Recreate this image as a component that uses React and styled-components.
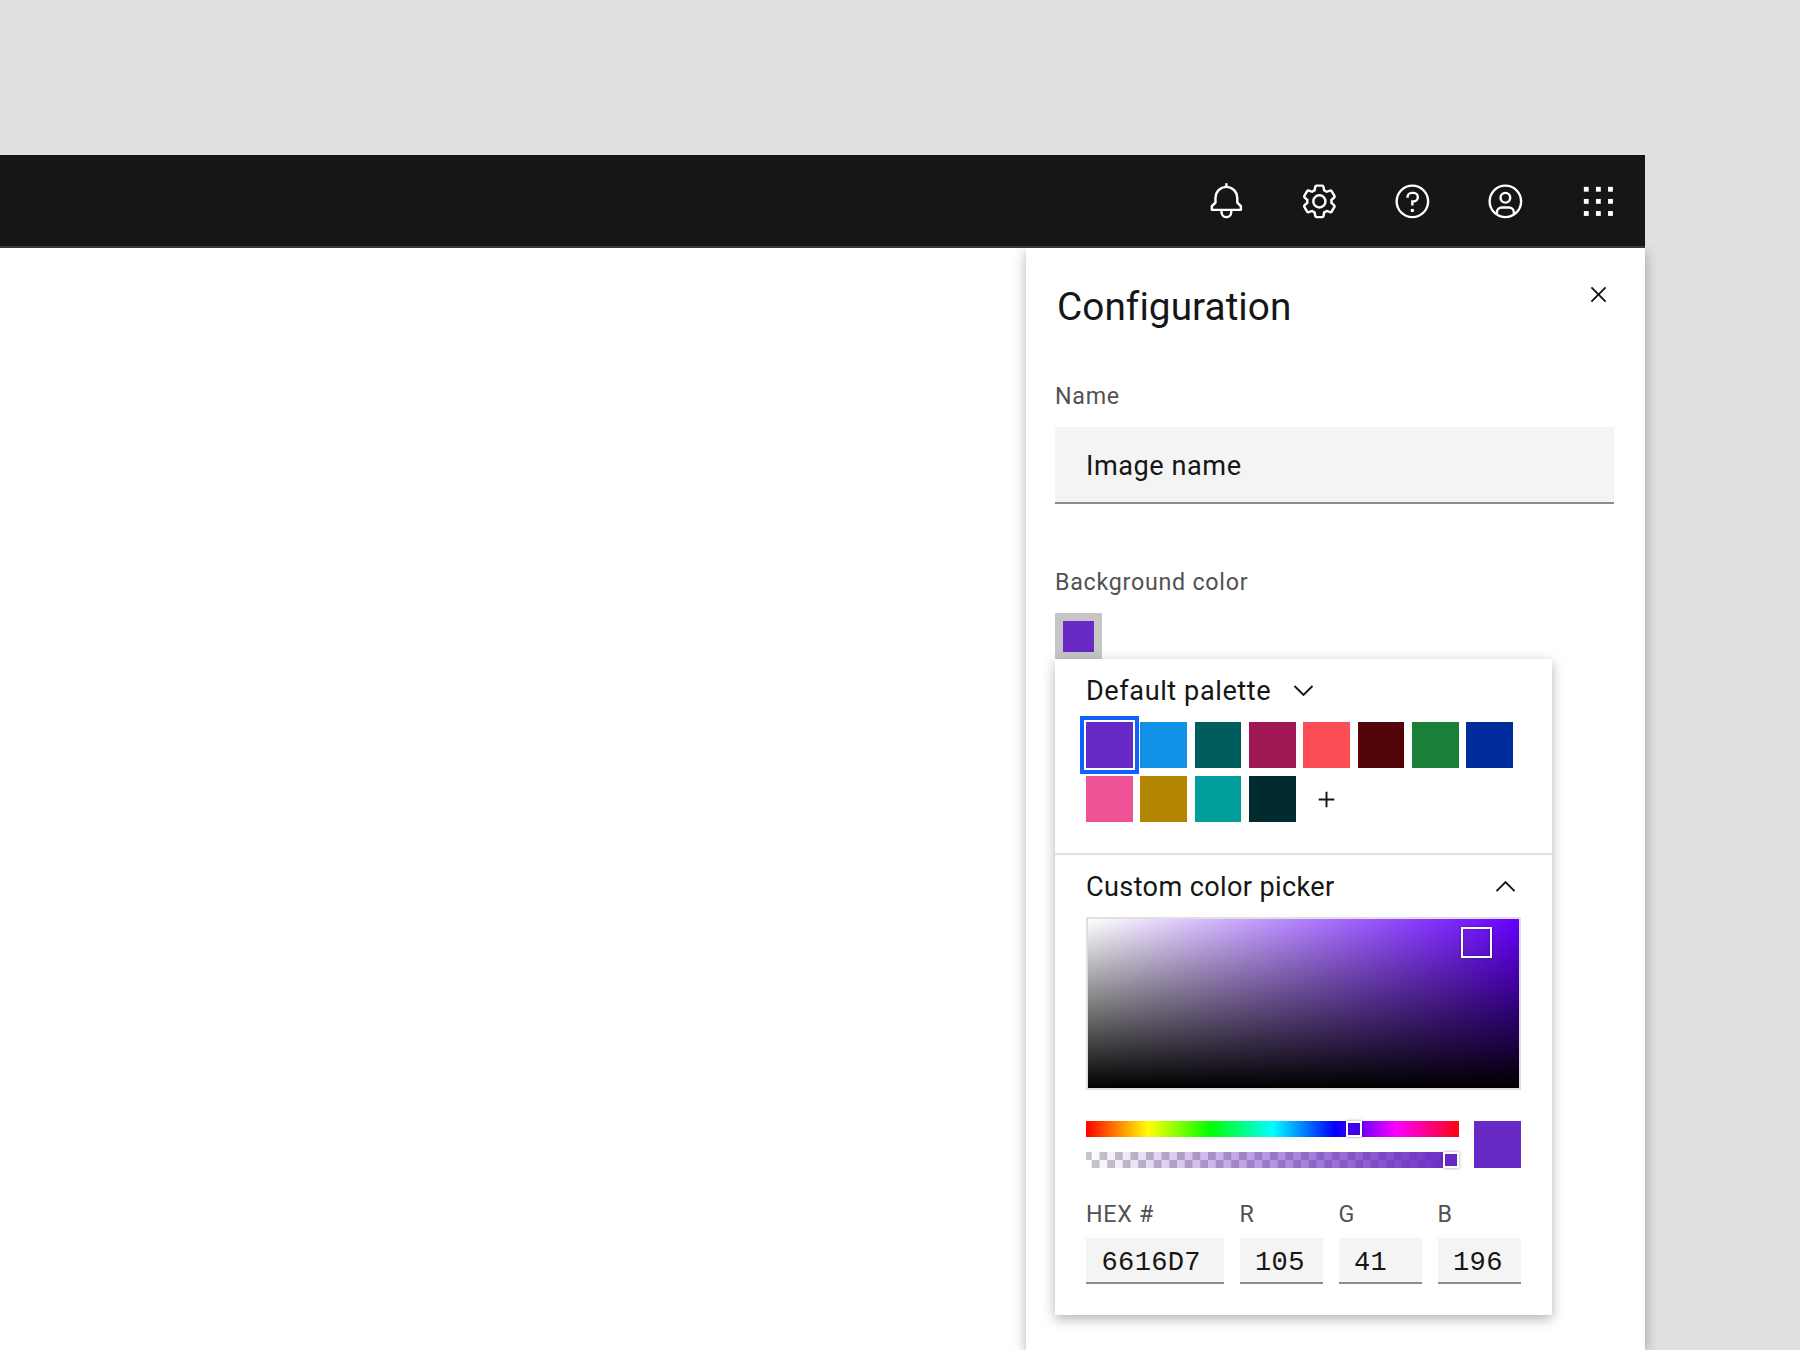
import React from "react";
import styled, { createGlobalStyle } from "styled-components";

const sans = `Roboto, "Noto Sans", sans-serif`;
const mono = `"Liberation Mono", "DejaVu Sans Mono", monospace`;

const GlobalStyle = createGlobalStyle`
  * { box-sizing: border-box; }
  body {
    margin: 0;
    background: #e0e0e0;
    color: #161616;
    font-family: ${sans};
  }
  button, input { font: inherit; color: inherit; border: 0; border-radius: 0; margin: 0; }
`;

const Page = styled.div`
  height: 1350px;
  padding-top: 155px;
  overflow: hidden;
`;

const Shell = styled.div`
  width: 1645px;
  height: 1195px;
  display: flex;
  flex-direction: column;
`;

const Header = styled.header`
  position: relative;
  z-index: 1;
  flex: none;
  height: 93px;
  display: flex;
  justify-content: flex-end;
  background: #161616;
  border-bottom: 2px solid #393939;
`;

const HeaderAction = styled.button`
  width: 93px;
  height: 93px;
  padding: 0 1px 0 0;
  display: grid;
  place-items: center;
  background: transparent;

  svg {
    width: 38.75px;
    height: 38.75px;
    fill: #fff;
  }
`;

const Body = styled.main`
  flex: 1;
  display: flex;
  justify-content: flex-end;
  background: #fff;
`;

const Panel = styled.aside`
  width: 619px;
  padding: 32px 31px 0 29px;
  background: #fff;
  box-shadow: 0 4px 12px rgba(0, 0, 0, 0.3);
`;

const PanelHeader = styled.div`
  display: flex;
  justify-content: space-between;
  align-items: flex-start;
  margin-bottom: 47px;
`;

const Title = styled.h1`
  margin: 0 0 0 2px;
  font-size: 38.75px;
  font-weight: 400;
  line-height: 54px;
  letter-spacing: 0.05px;
  font-variant-ligatures: common-ligatures;
`;

const CloseButton = styled.button`
  width: 31px;
  height: 31px;
  margin-top: -1px;
  padding: 0;
  background: transparent;

  svg {
    display: block;
    width: 31px;
    height: 31px;
    fill: #161616;
  }
`;

const Field = styled.div`
  margin-bottom: 63px;
`;

const Label = styled.label`
  display: block;
  font-size: 23.25px;
  line-height: 31px;
  letter-spacing: 0.73px;
  color: #525252;
  margin-bottom: ${(p) => p.$gap};
`;

const NameInput = styled.input`
  display: block;
  width: 100%;
  height: 77px;
  padding: 3px 31px 0;
  background: #f4f4f4;
  border-bottom: 2px solid #8d8d8d;
  font-size: 27.125px;
  letter-spacing: 0.55px;
`;

const Trigger = styled.button`
  display: block;
  width: 47px;
  height: 46px;
  padding: 0;
  background: #6929c4;
  border: 8px solid #c6c6c6;
  border-bottom-width: 7px;
`;

const Popover = styled.div`
  width: 497px;
  background: #fff;
  box-shadow: 0 4px 12px rgba(0, 0, 0, 0.3);
`;

const PaletteSection = styled.section`
  padding: 14px 31px 31px;
  border-bottom: 2px solid #e0e0e0;
`;

const PickerSection = styled.section`
  padding: 14px 31px 31px;
`;

const SectionHeader = styled.div`
  display: flex;
  align-items: center;
  justify-content: ${(p) => (p.$spread ? "space-between" : "flex-start")};
  gap: 17px;
  height: 36px;
  margin-bottom: ${(p) => (p.$spread ? "12px" : "13px")};
  font-size: 27.125px;
  line-height: 36px;
  letter-spacing: ${(p) => (p.$spread ? "0.36px" : "0.58px")};

  svg {
    width: 31px;
    height: 31px;
    margin-bottom: 2px;
    fill: #161616;
  }
`;

const SwatchGrid = styled.div`
  display: grid;
  grid-template-columns: repeat(8, 46.6px);
  grid-auto-rows: 46px;
  gap: 8px 7.75px;
`;

const Swatch = styled.button`
  padding: 0;
  background: ${(p) => p.$color};
  outline: ${(p) => (p.$selected ? "4px solid #0f62fe" : "none")};
  outline-offset: 2px;
`;

const AddSwatch = styled.button`
  padding: 0;
  display: grid;
  place-items: center;
  background: transparent;

  svg {
    width: 31px;
    height: 31px;
    fill: #161616;
  }
`;

const SaturationField = styled.div`
  position: relative;
  height: 173px;
  margin-bottom: 31px;
  border: 2px solid #e0e0e0;
  background: linear-gradient(to bottom, transparent, #000),
    linear-gradient(to right, #fff, #6600ff);
  background-origin: padding-box;
  background-clip: padding-box;
`;

const SaturationHandle = styled.span`
  position: absolute;
  left: 373px;
  top: 8px;
  width: 31px;
  height: 31px;
  border: 2px solid #fff;
  box-shadow: 0 0 2px rgba(0, 0, 0, 0.5), inset 0 0 2px rgba(0, 0, 0, 0.5);
`;

const Sliders = styled.div`
  display: grid;
  grid-template-columns: 1fr 47px;
  column-gap: 15px;
  margin-bottom: 31px;
`;

const Tracks = styled.div`
  display: flex;
  flex-direction: column;
  gap: 15px;
`;

const Track = styled.div`
  position: relative;
  height: 16px;
`;

const HueTrack = styled(Track)`
  background: linear-gradient(
    to right,
    #ff0000,
    #ffff00 16.67%,
    #00ff00 33.33%,
    #00ffff 50%,
    #0000ff 66.67%,
    #ff00ff 83.33%,
    #ff0010
  );
`;

const AlphaTrack = styled(Track)`
  background: linear-gradient(to right, rgba(105, 41, 196, 0), #6929c4),
    conic-gradient(#fff 25%, #c6c6c6 0 50%, #fff 0 75%, #c6c6c6 0) -2px 0 / 15.5px 16px;
`;

const TrackHandle = styled.span`
  position: absolute;
  top: 0;
  left: ${(p) => p.$left}px;
  width: 16px;
  height: 16px;
  background: ${(p) => p.$color};
  border: 2px solid #fff;
  box-shadow: 0 0 3px rgba(0, 0, 0, 0.4), inset 0 0 1px rgba(0, 0, 0, 0.6);
`;

const Preview = styled.div`
  height: 47px;
  background: #6929c4;
`;

const Channels = styled.div`
  display: grid;
  grid-template-columns: 138px repeat(3, 83.5px);
  justify-content: space-between;
`;

const ChannelInput = styled.input`
  display: block;
  width: 100%;
  height: 46px;
  padding: 5px 0 0 15.5px;
  background: #f4f4f4;
  border-bottom: 2px solid #8d8d8d;
  font-family: ${mono};
  font-size: 27.125px;
  letter-spacing: 0.3px;
`;

const Icon = ({ children }) => (
  <svg viewBox="0 0 32 32" aria-hidden="true">
    {children}
  </svg>
);

const BellIcon = () => (
  <Icon>
    <path d="M28.7071,19.293,26,16.5859V13a10.0136,10.0136,0,0,0-9-9.9492V1H15V3.0508A10.0136,10.0136,0,0,0,6,13v3.5859L3.2929,19.293A1,1,0,0,0,3,20v3a1,1,0,0,0,1,1h7v.7768a5.152,5.152,0,0,0,4.5,5.1987A5.0057,5.0057,0,0,0,21,25V24h7a1,1,0,0,0,1-1V20A1,1,0,0,0,28.7071,19.293ZM19,25a3,3,0,0,1-6,0V24h6Zm8-3H5V20.4141L7.707,17.707A1,1,0,0,0,8,17V13a8,8,0,0,1,16,0v4a1,1,0,0,0,.293.707L27,20.4141Z" />
  </Icon>
);

const SettingsIcon = () => (
  <Icon>
    <path d="M27,16.76c0-.25,0-.5,0-.76s0-.51,0-.77l1.92-1.68A2,2,0,0,0,29.3,11L26.94,7a2,2,0,0,0-1.73-1,2,2,0,0,0-.64.1l-2.43.82a11.35,11.35,0,0,0-1.31-.75l-.51-2.52a2,2,0,0,0-2-1.61H13.64a2,2,0,0,0-2,1.61l-.51,2.52a11.48,11.48,0,0,0-1.32.75L7.43,6.06A2,2,0,0,0,6.79,6,2,2,0,0,0,5.06,7L2.7,11a2,2,0,0,0,.41,2.51L5,15.24c0,.25,0,.5,0,.76s0,.51,0,.77L3.11,18.45A2,2,0,0,0,2.7,21L5.06,25a2,2,0,0,0,1.73,1,2,2,0,0,0,.64-.1l2.43-.82a11.35,11.35,0,0,0,1.31.75l.51,2.52a2,2,0,0,0,2,1.61h4.72a2,2,0,0,0,2-1.61l.51-2.52a11.48,11.48,0,0,0,1.32-.75l2.42.82a2,2,0,0,0,.64.1,2,2,0,0,0,1.73-1L29.3,21a2,2,0,0,0-.41-2.51ZM25.21,24l-3.43-1.16a8.86,8.86,0,0,1-2.71,1.57L18.36,28H13.64l-.71-3.55a9.36,9.36,0,0,1-2.7-1.57L6.79,24,4.43,20l2.72-2.4a8.9,8.9,0,0,1,0-3.13L4.43,12,6.79,8l3.43,1.16a8.86,8.86,0,0,1,2.71-1.57L13.64,4h4.72l.71,3.55a9.36,9.36,0,0,1,2.7,1.57L25.21,8,27.57,12l-2.72,2.4a8.9,8.9,0,0,1,0,3.13L27.57,20Z" />
    <path d="M16,22a6,6,0,1,1,6-6A5.94,5.94,0,0,1,16,22Zm0-10a3.91,3.91,0,0,0-4,4,3.91,3.91,0,0,0,4,4,3.91,3.91,0,0,0,4-4A3.91,3.91,0,0,0,16,12Z" />
  </Icon>
);

const HelpIcon = () => (
  <Icon>
    <path d="M16,2A14,14,0,1,0,30,16,14,14,0,0,0,16,2Zm0,26A12,12,0,1,1,28,16,12,12,0,0,1,16,28Z" />
    <circle cx="16" cy="23.5" r="1.5" />
    <path d="M17,8H15.5A4.49,4.49,0,0,0,11,12.49V13h2v-.5A2.5,2.5,0,0,1,15.5,10H17a2.5,2.5,0,0,1,0,5H15v4.5h2V17a4.5,4.5,0,0,0,0-9Z" />
  </Icon>
);

const UserIcon = () => (
  <Icon>
    <path d="M16,8a5,5,0,1,0,5,5A5,5,0,0,0,16,8Zm0,8a3,3,0,1,1,3-3A3.0034,3.0034,0,0,1,16,16Z" />
    <path d="M16,2A14,14,0,1,0,30,16,14.0158,14.0158,0,0,0,16,2ZM10,26.3765V25a3.0033,3.0033,0,0,1,3-3h6a3.0033,3.0033,0,0,1,3,3v1.3765a11.8989,11.8989,0,0,1-12,0Zm13.9925-1.4507A5.0016,5.0016,0,0,0,19,20H13a5.0016,5.0016,0,0,0-4.9925,4.9258,12,12,0,1,1,15.985,0Z" />
  </Icon>
);

const SwitcherIcon = () => (
  <Icon>
    {[4, 14, 24].map((y) =>
      [4, 14, 24].map((x) => <rect key={`${x}-${y}`} x={x} y={y} width="4" height="4" />)
    )}
  </Icon>
);

const CloseIcon = () => (
  <Icon>
    <path d="M24 9.4L22.6 8 16 14.6 9.4 8 8 9.4 14.6 16 8 22.6 9.4 24 16 17.4 22.6 24 24 22.6 17.4 16z" />
  </Icon>
);

const AddIcon = () => (
  <Icon>
    <path d="M17 15V8h-2v7H8v2h7v7h2v-7h7v-2z" />
  </Icon>
);

const ChevronDown = () => (
  <Icon>
    <path d="M16 22L6 12 7.4 10.6 16 19.2 24.6 10.6 26 12z" />
  </Icon>
);

const ChevronUp = () => (
  <Icon>
    <path d="M16 10L26 20 24.6 21.4 16 12.8 7.4 21.4 6 20z" />
  </Icon>
);

const actions = [
  ["Notifications", BellIcon],
  ["Settings", SettingsIcon],
  ["Help", HelpIcon],
  ["Account", UserIcon],
  ["App switcher", SwitcherIcon],
];

const palette = [
  "#6929c4", "#1192e8", "#005d5d", "#9f1853", "#fa4d56", "#520408", "#198038", "#002d9c",
  "#ee5396", "#b28600", "#009d9a", "#022b30",
];

const channels = [
  ["HEX #", "6616D7"],
  ["R", "105"],
  ["G", "41"],
  ["B", "196"],
];

export default function App() {
  return (
    <Page>
      <GlobalStyle />
      <Shell>
        <Header>
          {actions.map(([name, Glyph]) => (
            <HeaderAction key={name} aria-label={name}>
              <Glyph />
            </HeaderAction>
          ))}
        </Header>
        <Body>
          <Panel>
            <PanelHeader>
              <Title>Configuration</Title>
              <CloseButton aria-label="Close">
                <CloseIcon />
              </CloseButton>
            </PanelHeader>
            <Field>
              <Label htmlFor="name" $gap="15px">Name</Label>
              <NameInput id="name" defaultValue="Image name" />
            </Field>
            <Label as="div" $gap="15px">Background color</Label>
            <Trigger aria-label="Background color" />
            <Popover>
              <PaletteSection>
                <SectionHeader>
                  Default palette
                  <ChevronDown />
                </SectionHeader>
                <SwatchGrid>
                  {palette.map((color, i) => (
                    <Swatch key={color} $color={color} $selected={i === 0} aria-label={color} />
                  ))}
                  <AddSwatch aria-label="Add color">
                    <AddIcon />
                  </AddSwatch>
                </SwatchGrid>
              </PaletteSection>
              <PickerSection>
                <SectionHeader $spread>
                  Custom color picker
                  <ChevronUp />
                </SectionHeader>
                <SaturationField>
                  <SaturationHandle />
                </SaturationField>
                <Sliders>
                  <Tracks>
                    <HueTrack>
                      <TrackHandle $left={260} $color="#3f00f0" />
                    </HueTrack>
                    <AlphaTrack>
                      <TrackHandle $left={357} $color="#6929c4" />
                    </AlphaTrack>
                  </Tracks>
                  <Preview />
                </Sliders>
                <Channels>
                  {channels.map(([name, value]) => (
                    <div key={name}>
                      <Label htmlFor={name} $gap="8px">{name}</Label>
                      <ChannelInput id={name} defaultValue={value} />
                    </div>
                  ))}
                </Channels>
              </PickerSection>
            </Popover>
          </Panel>
        </Body>
      </Shell>
    </Page>
  );
}
